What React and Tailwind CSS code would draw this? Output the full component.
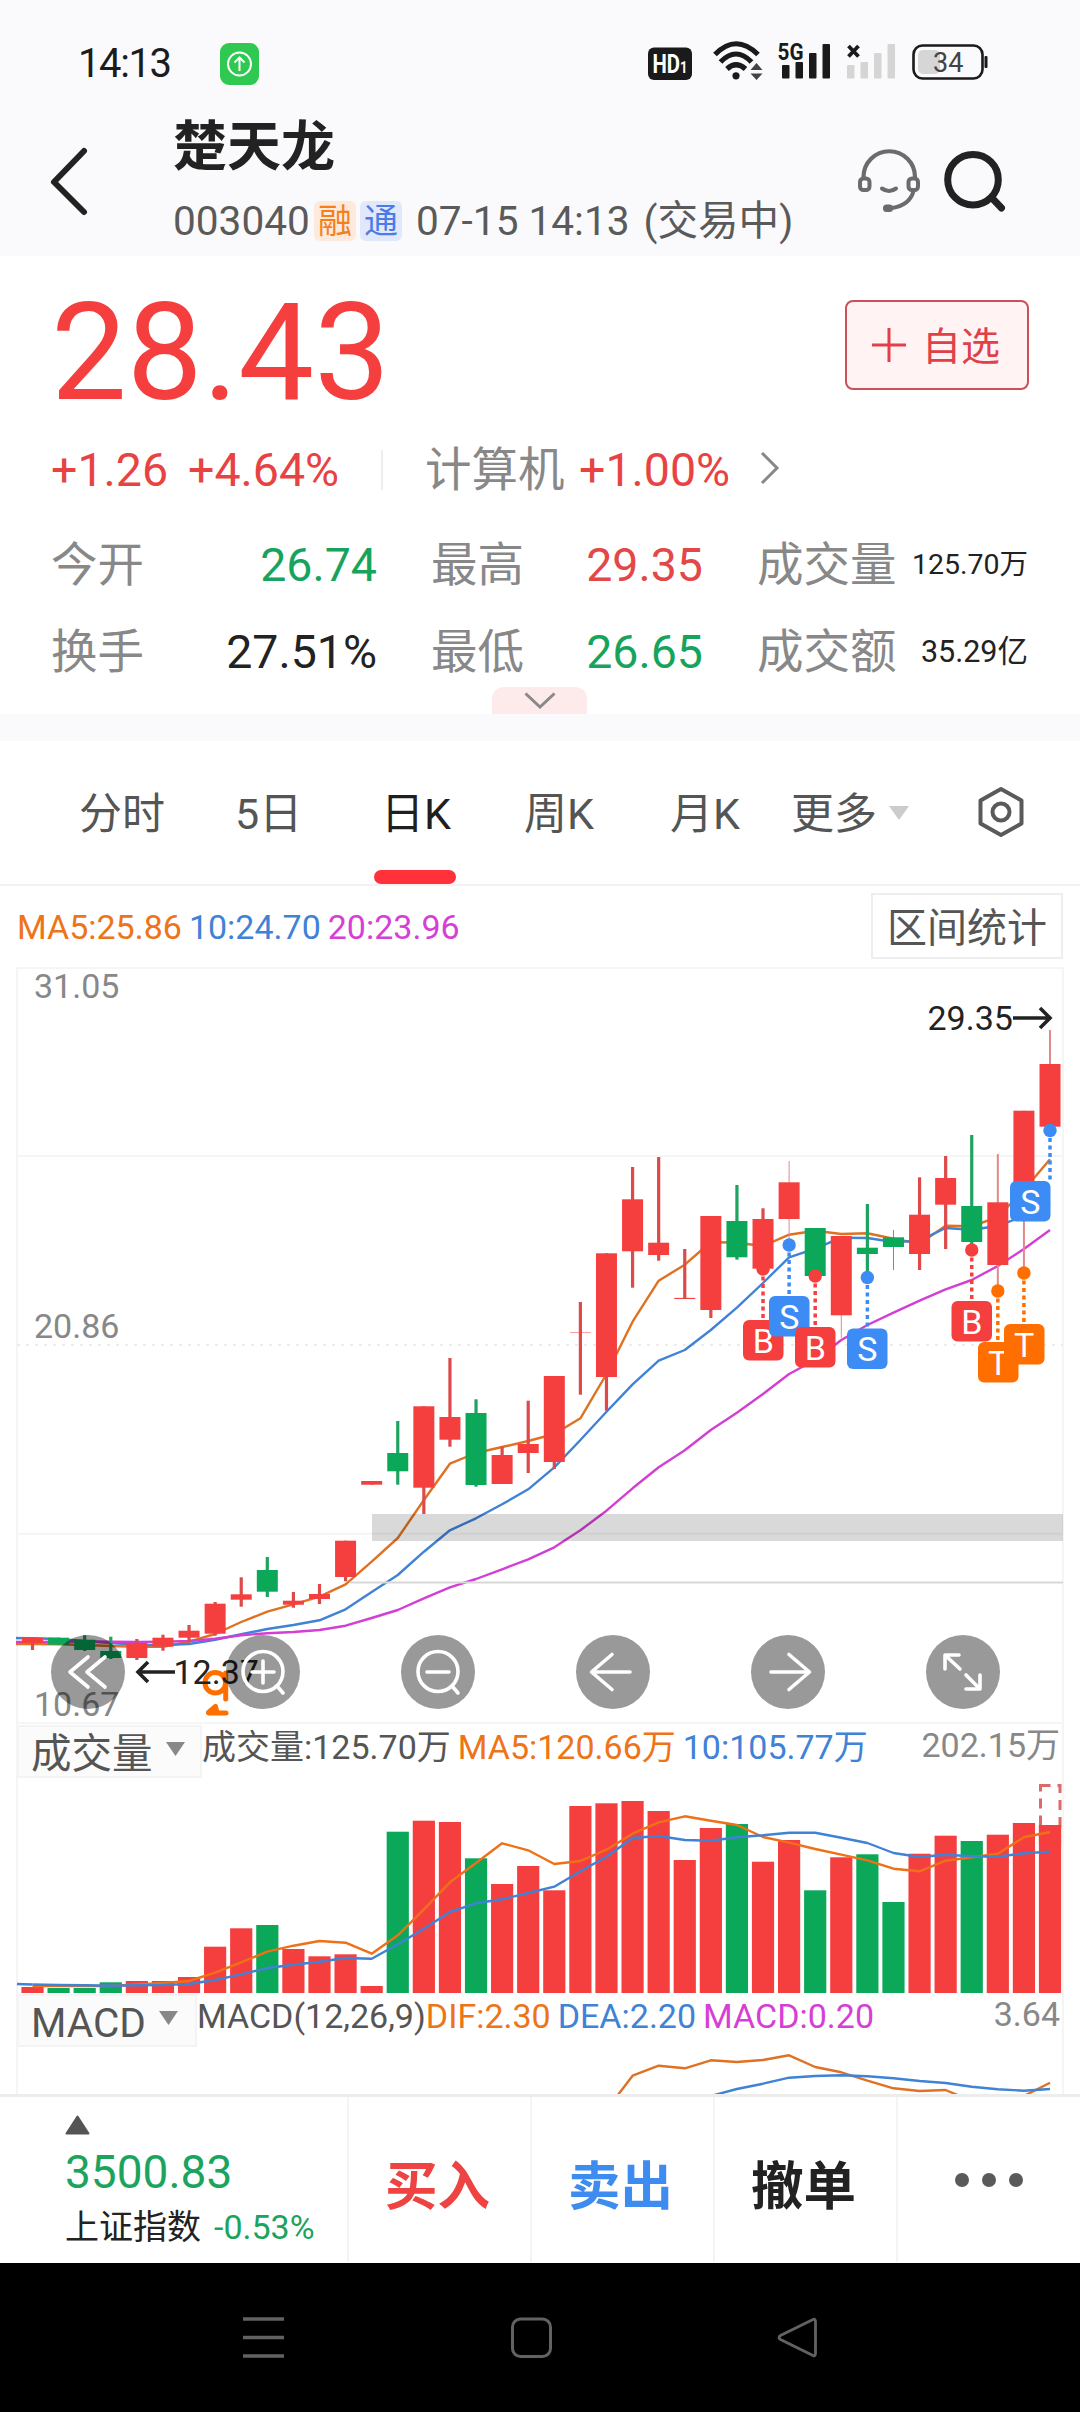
import clsx from 'clsx';

const RED = '#f53f3f';
const GREEN = '#0aa858';
const BLUE = '#3d8cf5';
const ORANGE = '#ff6f00';
const MA5 = '#df7222';
const MA10 = '#3f82d6';
const MA20 = '#d23fd2';
const WICK_RED = '#dd4a4a';
const WICK_GREEN = '#1fa360';

const quotes = [
  { label: '今开', value: '26.74', color: 'text-[#16a45c]', width: 'w-[326px]' },
  { label: '最高', value: '29.35', color: 'text-[#e24848]', width: 'w-[272px]' },
  { label: '成交量', value: '125.70万', color: 'text-[#222]', width: 'w-[271px]', size: 'text-[28.5px]' },
  { label: '换手', value: '27.51%', color: 'text-[#222]', width: 'w-[326px]' },
  { label: '最低', value: '26.65', color: 'text-[#16a45c]', width: 'w-[272px]' },
  { label: '成交额', value: '35.29亿', color: 'text-[#222]', width: 'w-[271px]', size: 'text-[30.5px]' },
];

// [high, bodyTop, bodyBottom, low, volumeTop, type, thin wick width]
const candles = [
  [1637.7, 1637.7, 1643, 1650, 1987, 'r'],
  [1637.7, 1637.7, 1644.7, 1645, 1988, 'g'],
  [1635, 1639.7, 1650, 1651, 1988, 'g'],
  [1636.7, 1651, 1658, 1659, 1982.3, 'g'],
  [1639, 1643, 1658, 1660, 1981, 'r'],
  [1634.7, 1637.7, 1646.7, 1650.7, 1981, 'r'],
  [1625, 1630.7, 1637.7, 1642.3, 1977, 'r'],
  [1602, 1603.7, 1633.7, 1635.7, 1946.7, 'r'],
  [1577.3, 1594.3, 1599.7, 1606.7, 1928.3, 'r'],
  [1557, 1570, 1591.7, 1597, 1925, 'g'],
  [1592, 1600.7, 1604.7, 1607.7, 1949, 'r'],
  [1584, 1594, 1599, 1604, 1956.3, 'r'],
  [1540.7, 1540.7, 1577, 1581.3, 1954.3, 'r'],
  [1481, 1481, 1484.7, 1484.7, 1986, 'r'],
  [1421, 1453, 1471.3, 1484.7, 1831.7, 'g'],
  [1406.3, 1406.3, 1487.7, 1514, 1820.7, 'r'],
  [1358, 1417, 1439.7, 1446.7, 1822, 'r'],
  [1399.3, 1413, 1485, 1486.7, 1858.3, 'g'],
  [1446.7, 1455, 1484, 1484, 1884, 'r'],
  [1400.7, 1444, 1453, 1473, 1866, 'r'],
  [1376, 1376, 1462, 1469, 1890.3, 'r'],
  [1302, 1332, 1332.5, 1394.7, 1806, 'r'],
  [1253.3, 1253.3, 1377, 1410.7, 1803.3, 'r'],
  [1167, 1199.3, 1251.3, 1287.7, 1801, 'r'],
  [1157, 1242.7, 1255, 1260.7, 1811, 'r'],
  [1249, 1297.9, 1299, 1299, 1860, 'r'],
  [1216, 1216, 1310, 1318, 1828, 'r'],
  [1185, 1221, 1257.3, 1259.7, 1824, 'g'],
  [1208.3, 1219, 1268.7, 1270, 1861.7, 'r'],
  [1161, 1182.3, 1219, 1240, 1840, 'r', 1],
  [1228, 1228, 1276, 1276, 1890.3, 'g'],
  [1236, 1236, 1315.3, 1338, 1857.3, 'r', 1],
  [1204, 1247.7, 1254, 1272, 1854.3, 'g'],
  [1230, 1237.3, 1247, 1270, 1902, 'g', 1],
  [1177.3, 1214.7, 1254, 1270, 1853.7, 'r'],
  [1156, 1178, 1204.7, 1249, 1835.7, 'r'],
  [1135, 1206, 1242, 1244, 1841, 'g'],
  [1154, 1202.3, 1265, 1285, 1834.7, 'r', 2],
  [1110.7, 1110.7, 1187, 1268, 1823, 'r', 2],
  [1030, 1064, 1126.7, 1126.7, 1825, 'r', 2],
].map(([high, top, bottom, low, vol, type, thin]) => ({ high, top, bottom, low, vol, type, thin }));

const ma5 = [1644, 1644.3, 1645, 1646, 1646.7, 1646.7, 1641.7, 1634, 1622, 1611.7, 1604.3, 1596.7, 1584.3, 1561.7, 1538, 1500, 1463.7, 1453, 1447, 1441, 1434, 1418.3, 1374, 1321.7, 1280.7, 1264.7, 1242, 1242.7, 1246, 1234.7, 1230.7, 1234, 1233.3, 1238.7, 1243.7, 1225.7, 1226.3, 1217, 1190, 1159.3];
const ma10 = [1638.3, 1639, 1641, 1643, 1644.7, 1645, 1644, 1639.7, 1634.3, 1629, 1625, 1620.3, 1609.3, 1592, 1575, 1551.7, 1530.3, 1518.3, 1504.3, 1489.3, 1467.3, 1440, 1411.7, 1384.3, 1360.7, 1350, 1330, 1307.7, 1283, 1257.3, 1248.7, 1237.7, 1238, 1242, 1240.7, 1228, 1229.7, 1226, 1216, 1203.3];
const ma20 = [1642, 1641.7, 1641.5, 1641.7, 1642, 1641.7, 1641, 1638.7, 1635.3, 1633.3, 1632, 1630, 1625.7, 1618, 1610, 1598.3, 1587.3, 1579, 1569.3, 1559.3, 1547.3, 1530.3, 1510.7, 1488.3, 1467.3, 1450.3, 1430, 1412.7, 1394, 1374, 1360, 1340, 1325, 1312.7, 1300.7, 1289.3, 1280, 1266, 1249, 1230];
const volMa5 = [1986, 1986, 1986, 1986, 1984.5, 1983, 1981, 1972.7, 1962.3, 1951.7, 1945.7, 1941, 1942.7, 1953.7, 1935.3, 1909.3, 1882.3, 1863, 1843.3, 1850.3, 1864, 1861, 1849.7, 1833.7, 1822.3, 1816.3, 1820.7, 1825, 1837, 1842.7, 1849, 1854.7, 1860.3, 1868.7, 1871.3, 1860.7, 1857.3, 1853.7, 1837.3, 1832];
const volMa10 = [1984.5, 1985, 1985.3, 1985.7, 1985.3, 1985, 1984, 1980, 1974.3, 1968, 1964.7, 1961.7, 1958, 1958.7, 1944.3, 1928.7, 1912, 1903.3, 1899.3, 1893, 1886.7, 1871.3, 1856.7, 1838, 1836, 1840, 1840.7, 1837.3, 1835.3, 1832.7, 1832.7, 1837.7, 1843, 1853, 1857, 1854.7, 1856.3, 1856.7, 1853.3, 1851.7];
const dif = [2110, 2075.7, 2065.7, 2068.3, 2060.3, 2062, 2060, 2055.3, 2067, 2072.3, 2080.7, 2088.3, 2091, 2090, 2101, 2106, 2096, 2082.7];
const dea = [2096, 2089, 2083.7, 2077.7, 2076, 2075.3, 2076.3, 2078.3, 2081, 2083, 2086.7, 2089.3, 2090.7, 2089];

// x of the box, y of the box, candle index, y of the dot
const markers = [
  { t: 'B', x: 743, y: 1320, i: 28, dot: 1269, fill: RED },
  { t: 'S', x: 769, y: 1296, i: 29, dot: 1245, fill: BLUE },
  { t: 'B', x: 795, y: 1327, i: 30, dot: 1276, fill: RED },
  { t: 'S', x: 847, y: 1328.5, i: 32, dot: 1277.5, fill: BLUE },
  { t: 'B', x: 951.5, y: 1301, i: 36, dot: 1250, fill: RED },
  { t: 'T', x: 978, y: 1342, i: 37, dot: 1291, fill: ORANGE },
  { t: 'T', x: 1004, y: 1324, i: 38, dot: 1273, fill: ORANGE },
  { t: 'S', x: 1010, y: 1181, i: 39, dot: 1130.5, fill: BLUE },
];

const cx = (i) => 32.5 + i * 26.09;
const toPoints = (values, from = 0) => values.map((y, i) => `${cx(i + from).toFixed(1)},${y}`).join(' ');

function Line({ values, from, color }) {
  return <polyline points={toPoints(values, from)} fill="none" stroke={color} strokeWidth="2.4" strokeLinejoin="round" />;
}

function Candle({ c, i }) {
  const wick = c.thin ? (c.type === 'r' ? '#e08a8a' : '#3fae77') : c.type === 'r' ? WICK_RED : WICK_GREEN;
  const w = c.thin || 3.2;
  return (
    <g>
      <rect x={cx(i) - w / 2} y={c.high} width={w} height={c.low - c.high} fill={wick} />
      <rect x={cx(i) - 10.5} y={c.top} width="21" height={c.bottom - c.top} fill={c.type === 'r' ? RED : GREEN} />
    </g>
  );
}

function StatusBar() {
  return (
    <div className="flex h-[106px] items-center pl-[78px]">
      <span className="mt-[22px] w-[142px] text-[40px] leading-none tracking-[-1.4px] text-[#1c1c1c]">14:13</span>
      <svg className="mt-[21px]" width="39" height="42" viewBox="0 0 39 42">
        <rect width="39" height="42" rx="9" fill="#2fc850" />
        <circle cx="19.5" cy="21" r="11.5" fill="none" stroke="#fff" strokeWidth="2" />
        <path d="M19.5 28V15M14.5 19.5l5-5 5 5" fill="none" stroke="#fff" strokeWidth="2" />
      </svg>
      <svg className="mt-[14px] ml-[381px]" width="360" height="60" viewBox="640 30 360 60" fontFamily="Roboto">
        <rect x="648" y="47.5" width="44" height="32.5" rx="6" fill="#1a1a1a" />
        <text x="652.5" y="72.5" fontSize="25" fontWeight="700" fill="#fff" textLength="35" lengthAdjust="spacingAndGlyphs">
          HD<tspan fontSize="16">1</tspan>
        </text>
        <g fill="none" stroke="#1a1a1a" strokeWidth="5.2">
          <path d="M715 54.5Q736 33 758 54.5" />
          <path d="M720.5 62Q736 46 751.5 62" />
          <path d="M727 69Q736 60.5 745.5 69" />
        </g>
        <circle cx="736" cy="75.8" r="3.6" fill="#1a1a1a" />
        <path d="M750.5 70L756.5 63L762.5 70ZM750.5 73.5H762.5L756.5 80Z" fill="#444" />
        <text x="777.5" y="59.5" fontSize="24" fontWeight="700" fill="#1a1a1a" textLength="26" lengthAdjust="spacingAndGlyphs">5G</text>
        <g fill="#1a1a1a">
          <rect x="782" y="65" width="7.5" height="13.5" rx="1" />
          <rect x="795.5" y="62" width="7.5" height="16.5" rx="1" />
          <rect x="809" y="53" width="7.5" height="25.5" rx="1" />
          <rect x="822.5" y="44" width="7.5" height="34.5" rx="1" />
        </g>
        <path d="M848.5 46L858.5 56.5M858.5 46L848.5 56.5" stroke="#1a1a1a" strokeWidth="3.8" />
        <g fill="#d5d5d5">
          <rect x="847" y="65" width="7.5" height="13.5" rx="1" />
          <rect x="860.5" y="62" width="7.5" height="16.5" rx="1" />
          <rect x="874" y="53" width="7.5" height="25.5" rx="1" />
          <rect x="887.5" y="44" width="7.5" height="34.5" rx="1" />
        </g>
        <rect x="918" y="50" width="22" height="24" rx="5" fill="#d6d6d6" />
        <rect x="913.5" y="45.5" width="69" height="33" rx="9" fill="none" stroke="#1a1a1a" strokeWidth="2.6" />
        <rect x="984.5" y="56" width="3" height="12" rx="1" fill="#1a1a1a" />
        <text x="933" y="72" fontSize="27" fill="#444">34</text>
      </svg>
    </div>
  );
}

function Header() {
  return (
    <div className="flex h-[150px] pl-[47px]">
      <svg className="mt-[38px]" width="46" height="76" viewBox="0 0 46 76">
        <path d="M37 7L7 38L37 68" fill="none" stroke="#222" strokeWidth="6" strokeLinecap="round" strokeLinejoin="round" />
      </svg>
      <div className="ml-[80px] w-[670px]">
        <h1 className="mt-[15px] text-[54px] leading-[54px] font-bold text-[#222]">楚天龙</h1>
        <div className="mt-[25px] flex h-[42px] items-center text-[40.6px] leading-none whitespace-nowrap text-[#5a5a5a]">
          <span className="w-[141px]">003040</span>
          <span className="mr-[4px] flex h-[40px] w-[42px] items-center justify-center rounded-md bg-[#fdeadc] text-[34px] text-[#f2811d]">融</span>
          <span className="mr-[14px] flex h-[40px] w-[42px] items-center justify-center rounded-md bg-[#e1e8fb] text-[34px] text-[#4b7ce6]">通</span>
          <span>07-15 14:13</span>
          <span className="ml-[14px]">(交易中)</span>
        </div>
      </div>
      <svg className="mt-[34px] ml-[9px]" width="170" height="80" viewBox="852 140 170 80" fill="none" strokeLinecap="round">
        <g stroke="#6b6b6b" strokeWidth="4">
          <path d="M863.5 178V177A25.5 25.5 0 0 1 915 177V178" strokeWidth="4.2" />
          <rect x="860" y="178.500" width="9.500" height="11.500" rx="3.500" />
          <rect x="908.500" y="178.500" width="9.500" height="11.500" rx="3.500" />
          <path d="M882 188.5Q889 193.5 896 188.5" />
          <path d="M913.5 191Q910 205 892 208" />
        </g>
        <rect x="883" y="204.500" width="10" height="7.500" rx="3.500" fill="#6b6b6b" />
        <circle cx="973" cy="179.7" r="25.3" stroke="#222" strokeWidth="7" />
        <path d="M992 198L1001.5 208" stroke="#222" strokeWidth="7" />
      </svg>
    </div>
  );
}

function Quote() {
  return (
    <div className="relative h-[458px] bg-white pl-[51px]">
      <div className="flex h-[176px] items-center justify-between pt-[2px] pr-[51px]">
        <span className="pt-[17px] text-[135px] leading-none text-[#f53f3f]">28.43</span>
        <button className="mb-[1px] flex h-[90px] w-[184px] items-center rounded-lg border-2 border-[#cc5058] bg-[#fff3f4] pl-[25px] text-[39px] leading-none text-[#e04048]">
          <svg className="mr-[16px]" width="34" height="34" viewBox="0 0 34 34">
            <path d="M17 0V34M0 17H34" stroke="#e04048" strokeWidth="3" />
          </svg>
          <span className="pt-[6px]">自选</span>
        </button>
      </div>
      <div className="mt-[10px] flex h-[56px] items-center text-[46.5px] leading-none whitespace-nowrap text-[#e84343]">
        <span className="w-[137px]">+1.26</span>
        <span className="w-[193px]">+4.64%</span>
        <span className="h-[40px] w-[2px] bg-[#eee]" />
        <span className="ml-[42px] w-[154px] text-[#888]">计算机</span>
        <span className="w-[181px]">+1.00%</span>
        <svg className="mb-[4px]" width="20" height="32" viewBox="0 0 20 32">
          <path d="M2 1L17 16L2 31" fill="none" stroke="#888" strokeWidth="3" />
        </svg>
      </div>
      <div className="mt-[39px] flex flex-wrap gap-x-[54px] gap-y-[31px]">
        {quotes.map((q) => (
          <div key={q.label} className={clsx('flex h-[56px] items-center justify-between text-[46.5px] leading-none whitespace-nowrap', q.width)}>
            <span className="text-[#888]">{q.label}</span>
            <span className={clsx(q.color, q.size)}>{q.value}</span>
          </div>
        ))}
      </div>
      <div className="absolute bottom-0 left-[492px] flex h-[27px] w-[95px] items-center justify-center rounded-t-xl bg-[#fdeaea]">
        <svg width="32" height="18" viewBox="0 0 32 18">
          <path d="M1.5 1.5L16 15L30.5 1.5" fill="none" stroke="#888" strokeWidth="3" />
        </svg>
      </div>
    </div>
  );
}

function Tabs() {
  return (
    <div className="flex h-[145px] items-center border-b-2 border-[#f2f2f2] bg-white pl-[79px] text-[43px] leading-none whitespace-nowrap text-[#555]">
      <span className="w-[156px] pt-[3px]">分时</span>
      <span className="w-[139px] pt-[3px]">5日</span>
      <span className="relative flex h-full w-[150px] items-center pt-[3px] pl-[7px] text-[#1f1f1f]">
        日K
        <i className="absolute bottom-0 left-0 h-[14px] w-[82px] rounded-full bg-[#ff323b]" />
      </span>
      <span className="w-[146px] pt-[3px]">周K</span>
      <span className="w-[121px] pt-[3px]">月K</span>
      <span className="pt-[3px]">更多</span>
      <svg className="ml-[12px]" width="20" height="14" viewBox="0 0 20 14">
        <path d="M0 0H20L10 14Z" fill="#ccc" />
      </svg>
      <svg className="mb-[2px] ml-[68px]" width="48" height="52" viewBox="0 0 48 52" fill="none" stroke="#5a5a5a" strokeWidth="4" strokeLinejoin="round">
        <path d="M24 3L44.5 14.5V37.5L24 49L3.5 37.5V14.5Z" />
        <circle cx="24" cy="26" r="8.500" />
      </svg>
    </div>
  );
}

function RoundButton({ children }) {
  return (
    <button className="h-[74px] w-[74px] rounded-full bg-black/40">
      <svg width="74" height="74" viewBox="0 0 74 74" fill="none" stroke="#fff" strokeWidth="3.6" strokeLinecap="round" strokeLinejoin="round">
        {children}
      </svg>
    </button>
  );
}

function KChart() {
  return (
    <div className="relative h-[758px]">
      <svg className="block" width="1080" height="758" viewBox="0 967 1080 758" fontFamily="Roboto">
        <g fill="none" stroke="#f5f5f5" strokeWidth="2">
          <path d="M17 1725V968H1063V1725M17 1156H1063M17 1533.7H1063M17 1723H1063" />
          <path d="M17 1345H1063" stroke="#ececec" strokeDasharray="3 6" />
        </g>
        <g fontSize="34" fill="#888">
          <text x="34" y="998">31.05</text>
          <text x="34" y="1338">20.86</text>
          <text x="34" y="1716">10.67</text>
        </g>
        <Line values={[1644, ...ma5]} from={-1} color={MA5} />
        <Line values={[1638, ...ma10]} from={-1} color={MA10} />
        <Line values={[1642, ...ma20]} from={-1} color={MA20} />
        <rect x="0" y="1620" width="16" height="40" fill="#fff" />
        <rect x="372" y="1514" width="691" height="27" fill="#000" opacity="0.15" />
        <rect x="350" y="1581.5" width="713" height="2" fill="#d8d8d8" />
        {candles.map((c, i) => <Candle key={i} c={c} i={i} />)}
        {markers.map((m) => (
          <g key={m.i}>
            <path d={`M${cx(m.i)} ${m.dot}V${m.y}`} stroke={m.fill} strokeWidth="3.5" strokeDasharray="4 3.5" />
            <circle cx={cx(m.i)} cy={m.dot} r="6.7" fill={m.fill} />
            <rect x={m.x} y={m.y} width="40.5" height="40.5" rx="6" fill={m.fill} />
            <text x={m.x + 20.25} y={m.y + 32.5} fontSize="34" fill="#fff" textAnchor="middle">{m.t}</text>
          </g>
        ))}
        <text x="927.5" y="1030" fontSize="34" fill="#222">29.35</text>
        <path d="M1013 1018H1049M1040 1008L1050 1018L1040 1028" fill="none" stroke="#222" strokeWidth="3.6" />
        <g fill="none" stroke={ORANGE} strokeWidth="5" strokeLinecap="round">
          <circle cx="215.3" cy="1682.7" r="10.3" />
          <path d="M225.7 1673V1699M209 1713H226" />
          <path d="M208.5 1712.5L215.5 1706.5L217 1712.5Z" fill={ORANGE} strokeLinejoin="round" />
        </g>
        <path d="M175 1672H138M148 1662L138 1672L148 1682" fill="none" stroke="#222" strokeWidth="3.6" />
        <text x="173.5" y="1684" fontSize="34" fill="#222">12.37</text>
      </svg>
      <div className="absolute bottom-[16px] left-[51px] flex gap-[101px]">
        <RoundButton><path d="M37 22L19 37L37 52M54 22L36 37L54 52" /></RoundButton>
        <RoundButton><circle cx="37" cy="36.5" r="20" /><path d="M51 51L57 58M26 37H48M37 26V48" /></RoundButton>
        <RoundButton><circle cx="37" cy="36.5" r="20" /><path d="M51 51L57 58M26 37H48" /></RoundButton>
        <RoundButton><path d="M54 37H16M36 19.5L15.5 37L36 54.5" /></RoundButton>
        <RoundButton><path d="M20 37H58M38 19.5L58.5 37L38 54.5" /></RoundButton>
        <RoundButton><path d="M19 34V20H33M20 21L34 34M40 40L53 53M40 54H54V40" /></RoundButton>
      </div>
    </div>
  );
}

function PanelHead({ name, width, children, max }) {
  return (
    <div className="absolute inset-x-0 top-0 flex text-[34px] leading-none whitespace-nowrap">
      <div className={clsx('ml-[17px] flex h-[53px] shrink-0 items-center border-2 border-[#f4f4f4] bg-[#fbfbfb] pl-[12px] text-[40.5px] text-[#555]', width)}>
        <span className="pt-[5px]">{name}</span>
        <svg className="mb-[5px] ml-[13px]" width="19" height="14" viewBox="0 0 19 14">
          <path d="M0 0H19L9.5 14Z" fill="#888" />
        </svg>
      </div>
      <div className="mt-[4px] flex h-[36px] items-center">{children}</div>
      <div className="mr-[20px] ml-auto h-[40px] leading-[40px] text-[#888]">{max}</div>
    </div>
  );
}

function Volume() {
  return (
    <div className="relative h-[269px]">
      <svg className="block" width="1080" height="269" viewBox="0 1725 1080 269">
        <path d="M17 1725V1994M1063 1725V1994" stroke="#f5f5f5" strokeWidth="2" />
        {candles.map((c, i) => (
          <rect key={i} x={cx(i) - 11.1} y={c.vol} width="22.2" height={1993 - c.vol} fill={c.type === 'r' ? RED : GREEN} />
        ))}
        <rect x="1040.5" y="1785.5" width="19.5" height="43" fill="none" stroke="#dd6a6a" strokeWidth="3" strokeDasharray="10 7" />
        <rect x="1038.9" y="1825" width="22.2" height="20" fill={RED} />
        <Line values={volMa5} color="#ee7018" />
        <Line values={volMa10} color={MA10} />
        <path d={`M17 1984L${cx(0)} 1984.5`} stroke={MA10} strokeWidth="2.4" />
      </svg>
      <PanelHead name="成交量" width="w-[185px]" max="202.15万">
        <span className="text-[#555]">成交量:125.70万</span>
        <span className="ml-[7px] text-[#ee7418]">MA5:120.66万</span>
        <span className="ml-[7px] text-[#3f82d6]">10:105.77万</span>
      </PanelHead>
    </div>
  );
}

function Macd() {
  return (
    <div className="relative h-[100px]">
      <svg className="block" width="1080" height="100" viewBox="0 1994 1080 100">
        <path d="M17 1994V2094M1063 1994V2094" stroke="#f5f5f5" strokeWidth="2" />
        <Line values={dif} from={22} color={MA5} />
        <Line values={dea} from={26} color={MA10} />
      </svg>
      <PanelHead name="MACD" width="w-[180px]" max="3.64">
        <span className="text-[#555]">MACD(12,26,9)</span>
        <span className="text-[#ee7418]">DIF:2.30</span>
        <span className="ml-[7px] text-[#3f82d6]">DEA:2.20</span>
        <span className="ml-[7px] text-[#d63fd6]">MACD:0.20</span>
      </PanelHead>
    </div>
  );
}

function BottomBar() {
  return (
    <div className="flex h-[169px] border-t-3 border-[#ececec] bg-white pb-[1px] leading-none">
      <div className="flex w-[347px] flex-col pl-[65px] whitespace-nowrap">
        <svg className="mt-[18px]" width="25" height="20" viewBox="0 0 25 20">
          <path d="M12.5 1.5L23.5 18.5H1.5Z" fill="#555" stroke="#555" strokeWidth="2" strokeLinejoin="round" />
        </svg>
        <span className="mt-[14px] text-[46px] text-[#1ba45e]">3500.83</span>
        <div className="mt-[15px] flex items-center text-[34px] text-[#222]">
          上证指数<span className="ml-[13px] text-[#1ba45e]">-0.53%</span>
        </div>
      </div>
      {[['买入', 'text-[#ef4242]'], ['卖出', 'text-[#3f8cf0]'], ['撤单', 'text-[#222]']].map(([label, color]) => (
        <button key={label} className={clsx('w-[183px] border-l-2 border-[#f4f4f4] pt-[16px] pr-[4px] text-[52.5px] font-bold', color)}>{label}</button>
      ))}
      <div className="flex flex-1 items-center justify-center gap-[13px] border-l-2 border-[#f4f4f4]">
        <i className="h-[14px] w-[14px] rounded-full bg-[#5a5a5a]" />
        <i className="h-[14px] w-[14px] rounded-full bg-[#5a5a5a]" />
        <i className="h-[14px] w-[14px] rounded-full bg-[#5a5a5a]" />
      </div>
    </div>
  );
}

function SystemNav() {
  return (
    <div className="flex h-[149px] bg-black pt-[52px] pl-[243px]">
      <svg width="580" height="46" viewBox="243 2315 580 46" fill="none" stroke="#626262" strokeWidth="3.6">
        <path d="M243 2319H284M243 2337.5H284M243 2356H284" />
        <rect x="512.500" y="2319" width="38" height="37.500" rx="8" strokeWidth="3" />
        <path d="M813 2319.5Q815.5 2318 815.5 2322V2353Q815.5 2357 813 2355.5L780.5 2339.5Q777.5 2337.5 780.5 2335.5Z" strokeWidth="2.8" />
      </svg>
    </div>
  );
}

export default function App() {
  return (
    <div className="h-[2412px] w-[1080px] overflow-hidden bg-[#fafafc] font-['Roboto','Noto_Sans_CJK_SC',sans-serif]">
      <StatusBar />
      <Header />
      <Quote />
      <div className="h-[27px]" />
      <Tabs />
      <div className="bg-white">
        <div className="flex h-[81px] items-center gap-[7px] pr-[17px] pl-[17px] text-[34px] leading-none">
          <span className="text-[#ee7418]">MA5:25.86</span>
          <span className="text-[#3f82d6]">10:24.70</span>
          <span className="text-[#d63fd6]">20:23.96</span>
          <button className="mb-[2px] ml-auto h-[66px] w-[192px] border-2 border-[#eee] pt-[6px] text-[40px] text-[#555]">区间统计</button>
        </div>
        <KChart />
        <Volume />
        <Macd />
      </div>
      <BottomBar />
      <SystemNav />
    </div>
  );
}
